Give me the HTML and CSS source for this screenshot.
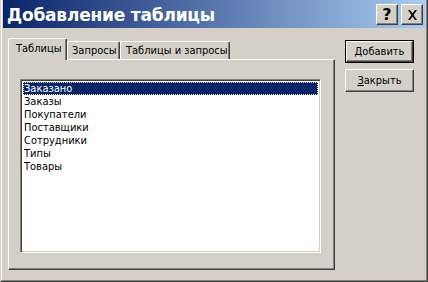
FILE: index.html
```html
<!DOCTYPE html>
<html>
<head>
<meta charset="utf-8">
<link rel="stylesheet" href="styles.css">
</head>
<body>
<div class="window">
  <div class="frame">
    <div class="titlebar">
      <span class="title">Добавление таблицы</span>
      <div class="caption-buttons">
        <button class="cap-btn"><span class="q">?</span></button>
        <button class="cap-btn">
          <svg width="11" height="10" viewBox="0 0 11 10"><path d="M1 0h2l2.5 3.5L8 0h2L6.5 5 10 10H8L5.5 6.5 3 10H1l3.5-5z" fill="#000"/></svg>
        </button>
      </div>
    </div>
    <div class="content">
      <div class="tabcontrol">
        <div class="tabstrip">
          <div class="tab active t1">Таблицы</div>
          <div class="tab t2">Запросы</div>
          <div class="tab t3">Таблицы и запросы</div>
        </div>
        <div class="panel">
          <div class="listbox">
            <div class="item selected"><span>Заказано</span></div>
            <div class="item"><span>Заказы</span></div>
            <div class="item"><span>Покупатели</span></div>
            <div class="item"><span>Поставщики</span></div>
            <div class="item"><span>Сотрудники</span></div>
            <div class="item"><span>Типы</span></div>
            <div class="item"><span>Товары</span></div>
          </div>
        </div>
      </div>
      <div class="actions">
        <div class="btn default"><div class="btn-inner"><u>Д</u>обавить</div></div>
        <div class="btn"><div class="btn-inner"><u>З</u>акрыть</div></div>
      </div>
    </div>
  </div>
</div>
</body>
</html>
```
FILE: styles.css
```css
* { box-sizing: border-box; }
html, body { margin: 0; padding: 0; background: #D4D0C8; }
body { font-family: "DejaVu Sans Condensed", "Liberation Sans", sans-serif; font-size: 11px; color: #000; }

.window {
  width: 428px;
  height: 282px;
  border-left: 1px solid #D4D0C8;
  border-right: 1px solid #404040;
  border-bottom: 1px solid #404040;
  background: #D4D0C8;
}
.frame {
  height: 100%;
  border-left: 1px solid #fff;
  border-right: 1px solid #808080;
  border-bottom: 1px solid #808080;
  padding: 0 1px 1px 1px;
  display: flex;
  flex-direction: column;
}
.titlebar {
  height: 28px;
  background: linear-gradient(to right, #0A246A, #A6CAF0);
  display: flex;
  align-items: center;
  justify-content: space-between;
  padding: 0 2px 0 4px;
}
.title {
  color: #fff;
  font-family: "DejaVu Sans", sans-serif;
  font-weight: bold;
  font-size: 17px;
  letter-spacing: -0.2px;
  margin-top: 2px;
}
.caption-buttons { display: flex; gap: 3px; margin-top: 1px; }
.cap-btn {
  width: 22px;
  height: 21px;
  padding: 0;
  margin: 0;
  background: #D4D0C8;
  border: 1px solid;
  border-color: #fff #404040 #404040 #fff;
  box-shadow: inset -1px -1px 0 #808080;
  display: flex;
  align-items: center;
  justify-content: center;
}
.q {
  font-family: "DejaVu Sans", sans-serif;
  font-weight: bold;
  font-size: 16px;
  line-height: 1;
}

.content {
  flex: 1;
  display: flex;
  align-items: flex-start;
  padding: 10px 0 0 5px;
  gap: 10px;
}
.tabcontrol { width: 327px; display: flex; flex-direction: column; }
.tabstrip {
  height: 21px;
  display: flex;
  align-items: flex-end;
}
.tab {
  flex: none;
  height: 18px;
  padding: 2px 0 0 4px;
  border-top: 1px solid #fff;
  border-left: 1px solid #fff;
  border-right: 1px solid #404040;
  box-shadow: inset -1px 0 0 #808080;
  border-radius: 2px 2px 0 0;
  white-space: nowrap;
  overflow: hidden;
}
.t1 { width: 59px; }
.t2 { width: 53px; }
.t3 { width: 110px; padding-left: 5px; }
.tab.active {
  height: 22px;
  margin-bottom: -1px;
  position: relative;
  z-index: 1;
  background: #D4D0C8;
  padding: 3px 0 0 7px;
}
.panel {
  height: 211px;
  border-top: 1px solid #fff;
  border-left: 1px solid #fff;
  border-right: 1px solid #404040;
  border-bottom: 1px solid #404040;
  box-shadow: inset -1px -1px 0 #808080;
  padding: 19px 13px 16px 11px;
  display: flex;
}
.listbox {
  flex: 1;
  background: #fff;
  border: 1px solid;
  border-color: #808080 #fff #fff #808080;
  box-shadow: inset 1px 1px 0 #404040, inset -1px -1px 0 #D4D0C8;
  padding: 2px 2px;
}
.item {
  height: 13px;
  line-height: 13px;
  padding-left: 1px;
  white-space: nowrap;
}
.item.selected {
  background: #0A246A;
  color: #fff;
  outline: 1px dotted #F0E0A0;
  outline-offset: -1px;
}

.actions {
  margin-top: 2px;
  display: flex;
  flex-direction: column;
  gap: 6px;
  width: 69px;
}
.btn {
  height: 23px;
  background: #D4D0C8;
  border: 1px solid;
  border-color: #fff #404040 #404040 #fff;
}
.btn-inner {
  height: 100%;
  box-shadow: inset -1px -1px 0 #808080;
  display: flex;
  align-items: center;
  justify-content: center;
  padding-bottom: 1px;
}
.btn.default {
  border: 1px solid #000;
}
.btn.default .btn-inner {
  border: 1px solid;
  border-color: #fff #404040 #404040 #fff;
  box-shadow: inset -1px -1px 0 #808080;
}
u { text-decoration-thickness: 1px; text-underline-offset: 1px; }
```
